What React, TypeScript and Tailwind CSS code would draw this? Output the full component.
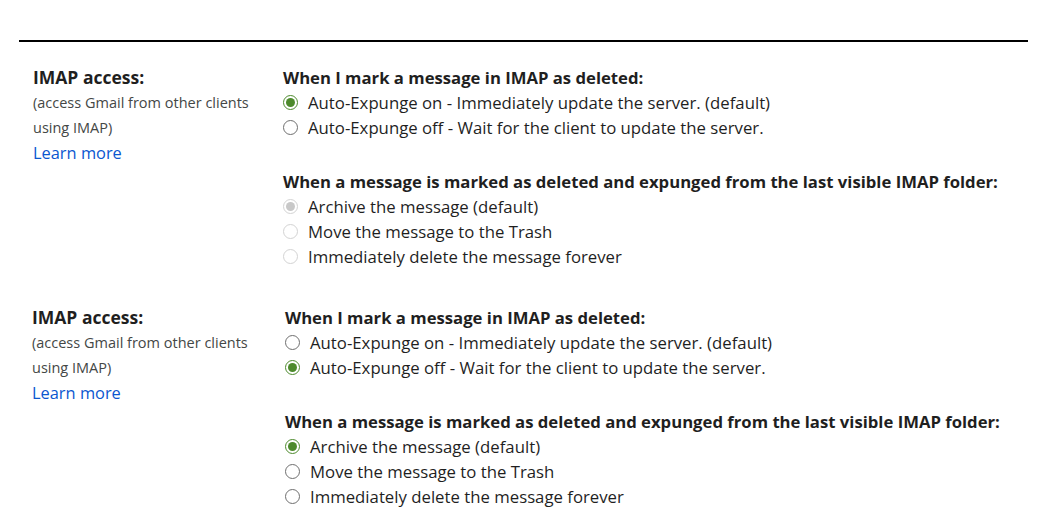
import React from 'react';

type Opt = { label: string; checked?: boolean };

const Radio: React.FC<{ checked?: boolean; disabled?: boolean }> = ({ checked, disabled }) => {
  const border = disabled ? 'border-[#d3d3d3]' : checked ? 'border-[#4d8a2c]' : 'border-[#6f6f6f]';
  return (
    <span className={`flex h-[15px] w-[15px] shrink-0 items-center justify-center rounded-full border-[1.5px] bg-white ${border}`}>
      {checked && <span className={`h-[9px] w-[9px] rounded-full ${disabled ? 'bg-[#c8c8c8]' : 'bg-[#4d8a2c]'}`} />}
    </span>
  );
};

const Group: React.FC<{ title: string; options: Opt[]; disabled?: boolean }> = ({ title, options, disabled }) => (
  <div>
    <div className="text-[16.7px] font-bold leading-[25px] text-[#1f1f1f]">{title}</div>
    {options.map((o) => (
      <label key={o.label} className="flex items-center gap-[10px] text-[16.75px] leading-[25px] text-[#1f1f1f]">
        <Radio checked={o.checked} disabled={disabled} />
        <span>{o.label}</span>
      </label>
    ))}
  </div>
);

const Block: React.FC<{ first: boolean }> = ({ first }) => (
  <div className={`flex ${first ? 'pl-[33px]' : 'pl-[32px]'}`}>
    <div className={`${first ? 'w-[250px]' : 'w-[253px]'} shrink-0`}>
      <div className="text-[17.5px] font-bold leading-[25px] text-[#1f1f1f]">IMAP access:</div>
      <div className="text-[14.5px] leading-[25px] text-[#444746]">
        (access Gmail from other clients
        <br />
        using IMAP)
      </div>
      <a className="text-[16.4px] leading-[25px] text-[#0b57d0]">Learn more</a>
    </div>
    <div className="flex flex-col gap-[29px]">
      <Group
        title="When I mark a message in IMAP as deleted:"
        options={[
          { label: 'Auto-Expunge on - Immediately update the server. (default)', checked: first },
          { label: 'Auto-Expunge off - Wait for the client to update the server.', checked: !first },
        ]}
      />
      <Group
        title="When a message is marked as deleted and expunged from the last visible IMAP folder:"
        disabled={first}
        options={[
          { label: 'Archive the message (default)', checked: true },
          { label: 'Move the message to the Trash' },
          { label: 'Immediately delete the message forever' },
        ]}
      />
    </div>
  </div>
);

export default function App() {
  return (
    <div className="h-[522px] w-[1038px] overflow-hidden bg-white pt-[40px] font-['Open_Sans',sans-serif]">
      <div className="mx-[19px] mr-[10px] h-[2px] bg-black" />
      <div className="flex flex-col gap-[36px] pt-[23px]">
        <Block first />
        <Block first={false} />
      </div>
    </div>
  );
}
